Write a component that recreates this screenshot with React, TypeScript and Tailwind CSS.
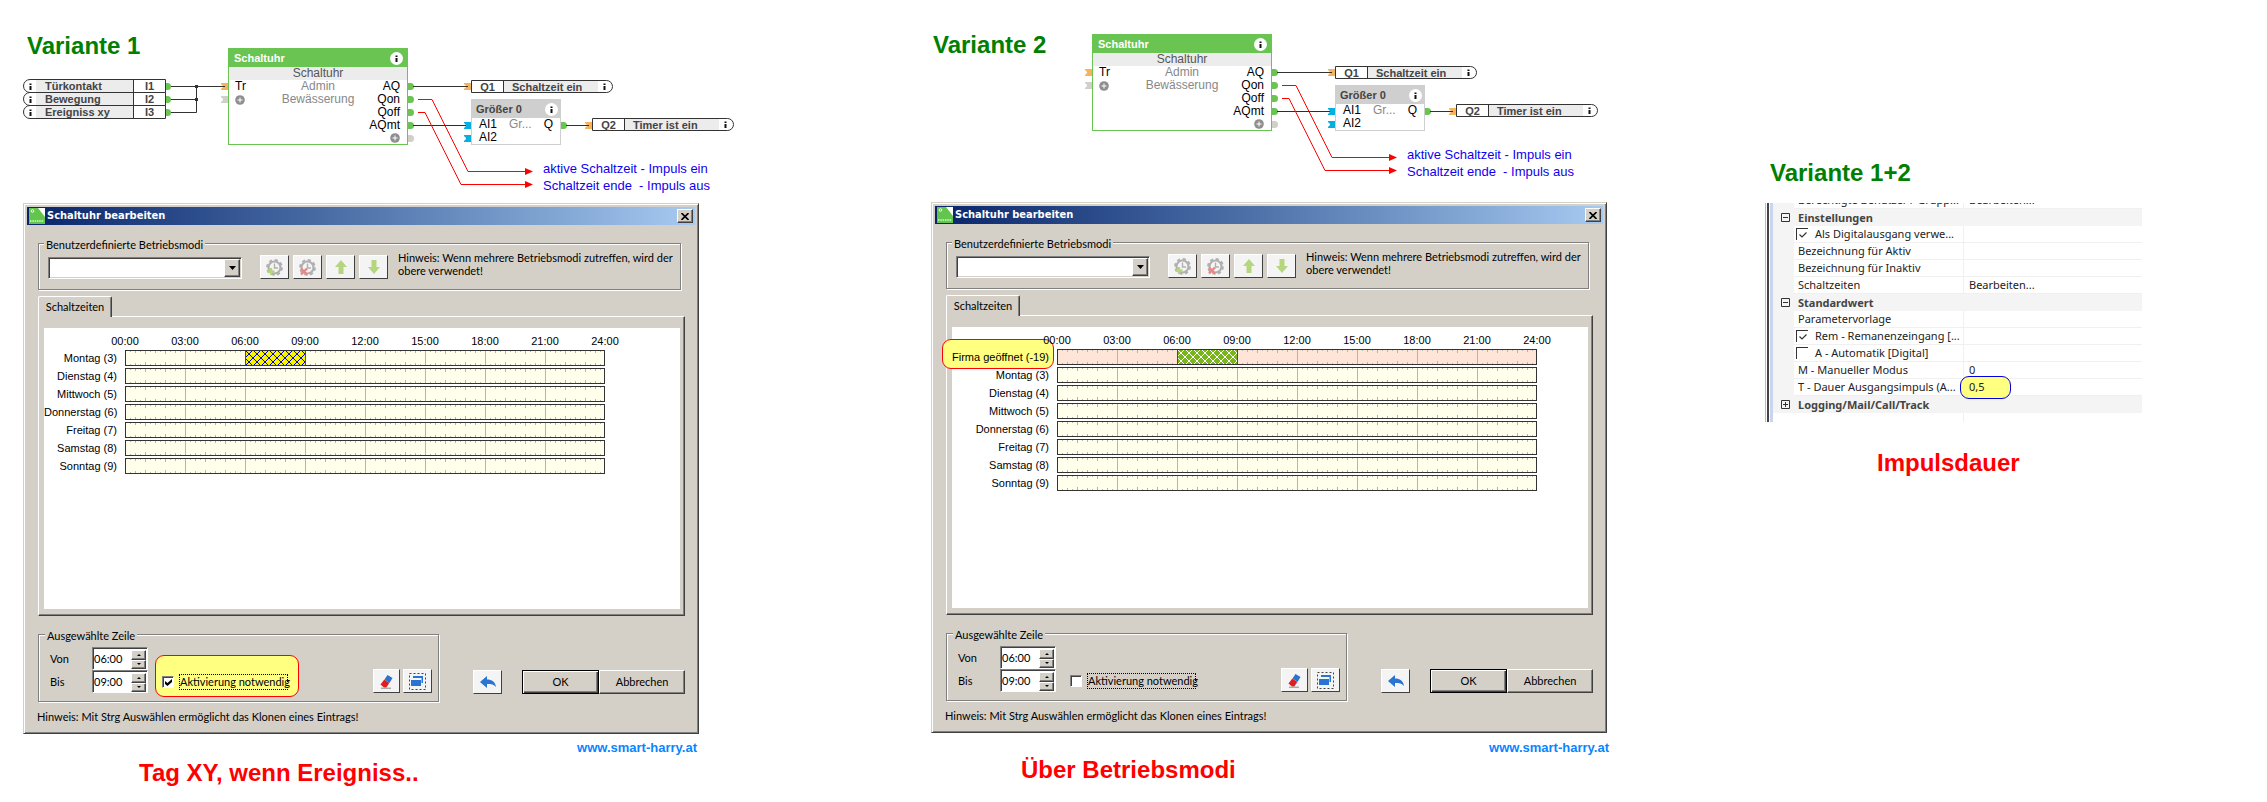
import { ReactNode } from 'react';

const RAISED =
  'border border-t-white border-l-white border-r-[#404040] border-b-[#404040] shadow-[inset_-1px_-1px_0_#808080]';

function InfoDot({ filled }: { filled?: boolean }) {
  return (
    <svg className="w-[13px] h-[13px] shrink-0" viewBox="0 0 13 13">
      {filled && <circle cx="6.5" cy="6.5" r="6.5" fill="#fff" />}
      <path d="M5.500 3.500h2v1.500h-2zM5.500 6h2v4h-2z" fill="#111" />
    </svg>
  );
}

function PlusDot() {
  return (
    <svg className="w-[10px] h-[10px]" viewBox="0 0 10 10">
      <circle cx="5" cy="5" r="4.8" fill="#8e8e8e" />
      <path d="M5 2.500v5M2.500 5h5" stroke="#fff" />
    </svg>
  );
}

function OutPort({ x, y, color = '#69c451' }: { x: number; y: number; color?: string }) {
  return <path d={`M${x} ${y - 3.5}h2.500a3.500 3.500 0 0 1 0 7h-2.500z`} fill={color} />;
}

function InPort({ x, y, color = '#f8b25c' }: { x: number; y: number; color?: string }) {
  return <path d={`M${x} ${y - 3.5}h7v7h-7v-1l2-2v-1l-2-2z`} fill={color} />;
}

function InputPill({ label, port }: { label: string; port: string }) {
  return (
    <div className="-mt-px flex h-[14px] w-[143px] items-stretch rounded-l-full border border-[#333] bg-white text-[11px] leading-3 font-bold text-[#444]">
      <span className="flex w-3 items-center"><InfoDot /></span>
      <span className="flex-1 bg-[#ececec] pl-[9px]">{label}</span>
      <span className="w-8 border-l border-[#333] text-center">{port}</span>
    </div>
  );
}

function OutputPill({ label, port }: { label: string; port: string }) {
  return (
    <div className="flex h-[13px] w-[142px] items-stretch rounded-r-full border border-[#333] bg-white text-[11px] leading-3 font-bold text-[#444]">
      <span className="w-8 border-r border-[#333] text-center">{port}</span>
      <span className="flex-1 bg-[#ececec] pl-2">{label}</span>
      <span className="flex w-[14px] items-center"><InfoDot /></span>
    </div>
  );
}

function InputSources() {
  return (
    <>
      <svg className="absolute left-0 top-[80px] h-[40px] w-[210px]" viewBox="0 0 210 40">
        <OutPort x={142} y={6.5} />
        <OutPort x={142} y={19.5} />
        <OutPort x={142} y={32.5} />
        <path d="M148 6.5h54M148 19.5h25.5M148 32.5h25.5v-26" fill="none" stroke="#333" />
        <path d="M172 5h3v3h-3zM172 18h3v3h-3z" fill="#333" />
      </svg>
      <div className="absolute left-0 top-[80px]">
        <InputPill label="Türkontakt" port="I1" />
        <InputPill label="Bewegung" port="I2" />
        <InputPill label="Ereigniss xy" port="I3" />
      </div>
    </>
  );
}

function LogicDiagram({ className }: { className: string }) {
  return (
    <div className={`absolute h-[150px] w-[520px] ${className}`}>
      <svg className="absolute inset-0" width="520" height="150" viewBox="0 0 520 150">
        <InPort x={1} y={38.5} />
        <InPort x={1} y={51.5} color="#d0cfc8" />
        <OutPort x={188} y={38.5} />
        <OutPort x={188} y={51.5} />
        <OutPort x={188} y={64.5} />
        <OutPort x={188} y={77.5} />
        <OutPort x={188} y={90.5} color="#d0cfc8" />
        <InPort x={244} y={38.5} />
        <InPort x={244} y={77.5} color="#05b0e0" />
        <InPort x={244} y={90.5} color="#05b0e0" />
        <OutPort x={341} y={77.5} />
        <InPort x={365} y={77.5} />
        <g fill="none">
          <path d="M193 38.5h55M346 77.5h23" stroke="#333" />
          <path d="M193 77.5h53" stroke="#7a0c0c" />
          <path d="M198 51.5h14l36 72h58M198 64.5h7l36 72h65" stroke="#f00" />
        </g>
        <path d="M305 120l8 3.5-8 3.5zM305 133l8 3.5-8 3.5z" fill="#f00" />
      </svg>

      {/* timer block */}
      <div className="absolute left-2 top-0 w-[180px] border border-[#69c451] bg-white text-[12px] leading-[13px] text-black">
        <div className="flex h-[18px] items-center justify-between bg-[#69c451] pl-[5px] pr-1 text-[11px] font-bold text-white">
          Schaltuhr <InfoDot filled />
        </div>
        <div className="bg-[#ececec] text-center text-[#555]">Schaltuhr</div>
        <div className="grid grid-cols-[40px_1fr_40px] px-[6px]">
          <div>
            <div>Tr</div>
            <div className="flex h-[13px] items-center"><PlusDot /></div>
          </div>
          <div className="text-center text-[#888]">
            <div>Admin</div>
            <div>Bewässerung</div>
          </div>
          <div className="pr-px text-right">
            <div>AQ</div>
            <div>Qon</div>
            <div>Qoff</div>
            <div>AQmt</div>
            <div className="flex h-3 items-center justify-end"><PlusDot /></div>
          </div>
        </div>
      </div>

      <div className="absolute left-[251px] top-8"><OutputPill port="Q1" label="Schaltzeit ein" /></div>

      <div className="absolute left-[251px] top-[51px] w-[90px] border border-[#cfcfcf] bg-white text-[12px] leading-[13px] text-black">
        <div className="flex h-[18px] items-center justify-between bg-[#cfcfcf] pl-1 pr-[2px] text-[11px] font-bold text-[#444]">
          Größer 0 <InfoDot filled />
        </div>
        <div className="grid grid-cols-[30px_1fr_auto] px-[7px]">
          <span>AI1</span>
          <span className="text-[#888]">Gr...</span>
          <span>Q</span>
          <span>AI2</span>
        </div>
      </div>

      <div className="absolute left-[372px] top-[70px]"><OutputPill port="Q2" label="Timer ist ein" /></div>

      <p className="absolute left-[323px] top-[112px] whitespace-pre text-[13px] leading-[17px] text-[#1000f0]">
        {'aktive Schaltzeit - Impuls ein\nSchaltzeit ende  - Impuls aus'}
      </p>
    </div>
  );
}

function ToolButton({ title, className = 'w-[29px]', children }: { title: string; className?: string; children: ReactNode }) {
  return (
    <button
      type="button"
      title={title}
      aria-label={title}
      className={`flex h-6 shrink-0 items-center justify-center border border-t-white border-l-white border-r-[#404040] border-b-[#404040] bg-[#f4f4f4] ${className}`}
    >
      {children}
    </button>
  );
}

function GearClock({ mark }: { mark: 'add' | 'remove' }) {
  return (
    <svg width="17" height="17" viewBox="0 0 17 17" fill="none">
      <circle cx="8.5" cy="8.5" r="6" stroke="#b0b0b0" strokeWidth="2.2" />
      <circle cx="8.5" cy="8.5" r="7.4" stroke="#b0b0b0" strokeWidth="2" strokeDasharray="3.2 2.61" />
      <path d="M8.5 4.5v4.5h3.5" stroke="#b0b0b0" strokeWidth="1.4" />
      {mark === 'add' ? (
        <path d="M5 9v7M1.5 12.5h7" stroke="#b5d67f" strokeWidth="2.4" />
      ) : (
        <path d="M2 9.5l6 6M8 9.5l-6 6" stroke="#ee8585" strokeWidth="2.4" />
      )}
    </svg>
  );
}

function TimeField({ id, label, value }: { id: string; label: string; value: string }) {
  return (
    <div className="flex items-center">
      <label htmlFor={id} className="w-[42px]">{label}</label>
      <div className="flex h-[23px] w-14 border border-t-[#808080] border-l-[#808080] border-r-white border-b-white bg-white shadow-[inset_1px_1px_0_#404040]">
        <input id={id} type="text" defaultValue={value} className="w-[38px] min-w-0 bg-transparent pl-[1px] outline-none" />
        <div className="flex flex-1 flex-col pt-[2px] pr-px">
          {['M0 3l2-2 2 2z', 'M0 1l2 2 2-2z'].map((d, i) => (
            <button
              key={d}
              type="button"
              aria-label={`${label} ${i ? 'verringern' : 'erhöhen'}`}
              className={`flex flex-1 items-center justify-center bg-[#d4d0c8] ${RAISED}`}
            >
              <svg width="4" height="4" viewBox="0 0 4 4"><path d={d} /></svg>
            </button>
          ))}
        </div>
      </div>
    </div>
  );
}

type Row = { label: string; firm?: boolean; from?: number; to?: number };

const WEEK: Row[] = [
  { label: 'Montag (3)' },
  { label: 'Dienstag (4)' },
  { label: 'Mittwoch (5)' },
  { label: 'Donnerstag (6)' },
  { label: 'Freitag (7)' },
  { label: 'Samstag (8)' },
  { label: 'Sonntag (9)' },
];

const ROWS_1: Row[] = [{ ...WEEK[0], from: 6, to: 9 }, ...WEEK.slice(1)];
const ROWS_2: Row[] = [{ label: 'Firma geöffnet (-19)', firm: true, from: 6, to: 9 }, ...WEEK];

// 20px per hour, a short tick every quarter
function Track({ row, id }: { row: Row; id: string }) {
  const ticks = [];
  for (let q = 1; q < 96; q++) {
    const x = q * 5;
    const len = q % 12 === 0 ? 8 : q % 4 === 0 ? 3 : q % 2 === 0 ? 2 : 1;
    ticks.push(`M${x} 1h1v${len}h-1zM${x} ${15 - len}h1v${len}h-1z`);
  }
  const { from = 0, to = 0 } = row;
  return (
    <svg className="h-4 w-full" viewBox="0 0 480 16" preserveAspectRatio="none" shapeRendering="crispEdges">
      <defs>
        <pattern id={id} width="8" height="8" patternUnits="userSpaceOnUse">
          <rect width="8" height="8" fill={row.firm ? '#7ab51d' : '#f8f400'} />
          <path
            d="M-1 -1l10 10M9 -1l-10 10"
            stroke={row.firm ? '#fff' : '#0000e0'}
            shapeRendering="geometricPrecision"
          />
        </pattern>
      </defs>
      <rect x="0.5" y="0.5" width="479" height="15" fill={row.firm ? '#ffe4d8' : '#ffffec'} stroke="#333" />
      <path d={ticks.join('')} fill="#b4b4b4" />
      {to > from && (
        <>
          <rect x={from * 20} y="1" width={(to - from) * 20} height="14" fill={`url(#${id})`} />
          <path d={`M${from * 20 + 0.5} 1v14M${to * 20 + 0.5} 1v14`} stroke="#f00" />
        </>
      )}
    </svg>
  );
}

function Timeline({ name, rows, cols, marked }: { name: string; rows: Row[]; cols: string; marked?: boolean }) {
  const hours = ['00:00', '03:00', '06:00', '09:00', '12:00', '15:00', '18:00', '21:00', '24:00'];
  return (
    <div className="relative h-[281px] bg-white pt-[6px] font-['Liberation_Sans',Arial,sans-serif] text-[11px] text-black">
      {marked && (
        <div className="absolute -left-[10px] top-3 h-[30px] w-[112px] rounded-[9px] border border-[#f00] bg-[#ffff80]" />
      )}
      <div className={`relative grid ${cols}`}>
        <span />
        <div className="-mx-[30px] flex h-4 justify-between leading-[14px]">
          {hours.map((h) => (
            <span key={h} className="w-[60px] text-center">{h}</span>
          ))}
        </div>
        {rows.map((row, i) => (
          <div key={row.label} className="col-span-2 grid h-[18px] grid-cols-subgrid leading-4">
            <span className="whitespace-nowrap pr-2 text-right">{row.label}</span>
            <Track row={row} id={`${name}-hatch-${i}`} />
          </div>
        ))}
      </div>
    </div>
  );
}

type DialogProps = { name: string; rows: Row[]; cols: string; checked: boolean; marked?: boolean };

function ScheduleDialog({ name, rows, cols, checked, marked }: DialogProps) {
  return (
    <section className="w-full max-w-[676px] border border-t-[#d4d0c8] border-l-[#d4d0c8] border-r-[#404040] border-b-[#404040] bg-[#d4d0c8] p-[3px] font-[Lato,Tahoma,sans-serif] text-[11px] text-black shadow-[inset_1px_1px_0_#fff,inset_-1px_-1px_0_#808080]">
      <header className="flex h-[18px] items-center bg-linear-to-r from-[#0a246a] to-[#a6caf0] px-[2px]">
        <svg width="16" height="16" viewBox="0 0 16 16">
          <path d="M0 0h10l6 8v8H0z" fill="#62c64c" />
          <path d="M9 0h7v9z" fill="#fff" />
          <circle cx="3.5" cy="3" r="1.3" fill="none" stroke="#fff" />
          <path d="M1 13h14" stroke="#d8f5d0" strokeWidth="1.5" strokeDasharray="1.5 .8" />
        </svg>
        <h2 className="flex-1 pl-[2px] font-['DejaVu_Sans_Condensed','DejaVu_Sans',sans-serif] font-bold text-white">
          Schaltuhr bearbeiten
        </h2>
        <button type="button" aria-label="Schließen" className={`flex h-[14px] w-4 items-center justify-center bg-[#d4d0c8] ${RAISED}`}>
          <svg width="8" height="7" viewBox="0 0 8 7"><path d="M.5 0l7 7M7.5 0l-7 7" stroke="#000" strokeWidth="1.6" /></svg>
        </button>
      </header>

      <div className="pl-[11px] pr-[10px] pt-3">
        <fieldset className="mr-1 h-[53px] border border-[#808080] pl-[9px] pr-[2px] shadow-[1px_1px_0_#fff,inset_1px_1px_0_#fff]">
          <legend className="-ml-[4px] h-[13px] bg-[#d4d0c8] px-[2px] leading-[15px]">Benutzerdefinierte Betriebsmodi</legend>
          <div className="flex">
            <div className="relative mt-[7px] h-[22px] w-[194px] shrink-0 border border-t-[#808080] border-l-[#808080] border-r-white border-b-white bg-white shadow-[inset_1px_1px_0_#404040,inset_-1px_-1px_0_#d4d0c8]">
              <select aria-label="Betriebsmodus" className="h-full w-full appearance-none bg-transparent px-1 outline-none" defaultValue="">
                <option value=""></option>
              </select>
              <span className={`pointer-events-none absolute bottom-px right-px top-px flex w-4 items-center justify-center bg-[#d4d0c8] ${RAISED}`}>
                <svg width="7" height="4" viewBox="0 0 7 4"><path d="M0 0h7L3.5 4z" /></svg>
              </span>
            </div>
            <div className="ml-[18px] flex gap-1 pt-[5px]">
              <ToolButton title="Betriebsmodus hinzufügen"><GearClock mark="add" /></ToolButton>
              <ToolButton title="Betriebsmodus entfernen"><GearClock mark="remove" /></ToolButton>
              <ToolButton title="Nach oben">
                <svg width="12" height="14" viewBox="0 0 12 14"><path d="M6 0l6 7H8.500v7h-5V7H0z" fill="#b5d67f" /></svg>
              </ToolButton>
              <ToolButton title="Nach unten">
                <svg width="12" height="14" viewBox="0 0 12 14"><path d="M6 14l6-7H8.500V0h-5v7H0z" fill="#b5d67f" /></svg>
              </ToolButton>
            </div>
            <p className="ml-[10px] pt-px leading-[13px]">
              Hinweis: Wenn mehrere Betriebsmodi zutreffen, wird der<br />
              obere verwendet!
            </p>
          </div>
        </fieldset>

        {/* tabs */}
        <div role="tablist" className="mt-[6px] flex">
          <button
            type="button"
            role="tab"
            aria-selected="true"
            className="relative -mb-px h-[21px] w-[74px] rounded-t-[2px] border border-b-0 border-t-white border-l-white border-r-[#404040] bg-[#d4d0c8] shadow-[inset_-1px_0_0_#808080]"
          >
            Schaltzeiten
          </button>
        </div>
        <div className="border border-t-white border-l-white border-r-[#404040] border-b-[#404040] pb-[6px] pl-[5px] pr-1 pt-[11px] shadow-[inset_-1px_-1px_0_#808080]">
          <Timeline name={name} rows={rows} cols={cols} marked={marked} />
        </div>

        <div className="mt-3 flex items-end">
          <fieldset className="h-[74px] w-[401px] shrink-0 border border-[#808080] px-[11px] shadow-[1px_1px_0_#fff,inset_1px_1px_0_#fff]">
            <legend className="-ml-[5px] h-[13px] bg-[#d4d0c8] px-[2px] leading-[15px]">Ausgewählte Zeile</legend>
            <div className="flex items-end pt-[6px]">
              <div className="leading-[18px]">
                <TimeField id={`${name}-von`} label="Von" value="06:00" />
                <TimeField id={`${name}-bis`} label="Bis" value="09:00" />
              </div>
              <div
                className={`ml-[7px] -mb-1 flex h-[42px] w-[144px] items-end rounded-[9px] border pb-[6px] pl-[6px] ${
                  checked ? 'border-[#f00] bg-[#ffff80]' : 'border-transparent'
                }`}
              >
                <span className="relative mb-[2px] h-3 w-3">
                  <input
                    id={`${name}-aktiv`}
                    type="checkbox"
                    defaultChecked={checked}
                    className="peer block h-3 w-3 appearance-none border border-t-[#808080] border-l-[#808080] border-r-white border-b-white bg-white shadow-[inset_1px_1px_0_#404040]"
                  />
                  <svg className="pointer-events-none absolute left-[3px] top-[3px] hidden peer-checked:block" width="7" height="7" viewBox="0 0 7 7">
                    <path d="M0 2v3l2.500 2L7 3V0L2.500 4z" />
                  </svg>
                </span>
                <label htmlFor={`${name}-aktiv`} className="ml-[5px] h-4 w-[109px] whitespace-nowrap border border-dotted border-black leading-[14px]">
                  Aktivierung notwendig
                </label>
              </div>
              <div className="ml-auto -mr-[5px] flex gap-[3px]">
                <ToolButton title="Löschen" className="w-[27px]">
                  <svg width="13" height="15" viewBox="0 0 13 15">
                    <path d="M7.500 1l5 3-3 5-5-3.500z" fill="#2874d0" />
                    <path d="M4.300 5.500l5 3.500-3 4.500H4L.5 10.500z" fill="#dc1f1f" />
                    <path d="M1 14.200h10" stroke="#888" />
                  </svg>
                </ToolButton>
                <ToolButton title="Auswahl kopieren">
                  <svg width="17" height="17" viewBox="0 0 17 17">
                    <rect x=".5" y=".5" width="16" height="16" fill="none" stroke="#444" strokeDasharray="2 2" />
                    <path d="M4 3h10v7h-1.500V5H4z" fill="#2874d0" />
                    <path d="M2 7h10v6H2z" fill="#2874d0" />
                  </svg>
                </ToolButton>
              </div>
            </div>
          </fieldset>
          <div className="mb-2 ml-[34px] flex">
            <ToolButton title="Rückgängig">
              <svg width="16" height="12" viewBox="0 0 16 12">
                <path d="M0 6l7-6v3.500c5 0 8 2 9 7.500-2-2.500-4.500-3-9-3V12z" fill="#2874d0" />
              </svg>
            </ToolButton>
          </div>
          <div className="mb-2 ml-5 flex flex-1">
            <button type="button" className="h-6 flex-[77] border border-black bg-[#d4d0c8] shadow-[inset_1px_1px_0_#fff,inset_-1px_-1px_0_#404040,inset_-2px_-2px_0_#808080]">OK</button>
            <button type="button" className={`h-6 flex-[86] bg-[#d4d0c8] ${RAISED}`}>Abbrechen</button>
          </div>
        </div>

        <p className="-ml-px pb-[5px] pt-[7px] leading-[16px]">
          Hinweis: Mit Strg Auswählen ermöglicht das Klonen eines Eintrags!
        </p>
      </div>
    </section>
  );
}

type Prop = { name: string; value?: string; group?: 'open' | 'closed'; check?: boolean; marked?: boolean };

const PROPS: Prop[] = [
  { name: 'Berechtigte Benutzer / Grupp...', value: 'Bearbeiten...' },
  { name: 'Einstellungen', group: 'open' },
  { name: 'Als Digitalausgang verwe...', check: true },
  { name: 'Bezeichnung für Aktiv' },
  { name: 'Bezeichnung für Inaktiv' },
  { name: 'Schaltzeiten', value: 'Bearbeiten...' },
  { name: 'Standardwert', group: 'open' },
  { name: 'Parametervorlage' },
  { name: 'Rem - Remanenzeingang [...', check: true },
  { name: 'A - Automatik [Digital]', check: false },
  { name: 'M - Manueller Modus', value: '0' },
  { name: 'T - Dauer Ausgangsimpuls (A...', value: '0,5', marked: true },
  { name: 'Logging/Mail/Call/Track', group: 'closed' },
];

function PropertyCheck({ prop }: { prop: Prop }) {
  return (
    <label className="flex items-center">
      <span className="relative -ml-[2px] mr-[7px] h-3 w-3 shrink-0">
        <input type="checkbox" defaultChecked={prop.check} className="peer block h-3 w-3 appearance-none border-l border-t border-[#333] bg-white" />
        <svg className="pointer-events-none absolute left-[3px] top-[4px] hidden peer-checked:block" width="8" height="6" viewBox="0 0 8 6">
          <path d="M.5 2.500l2.500 2.500L7.500.5" fill="none" stroke="#333" strokeWidth="1.2" />
        </svg>
      </span>
      {prop.name}
    </label>
  );
}

function PropertyGrid() {
  return (
    <div className="flex h-[219px] w-full max-w-[377px] overflow-hidden font-['Noto_Sans','Open_Sans',sans-serif] text-[11px] text-[#222]">
      <div className="w-1 shrink-0 border-l border-r-2 border-l-[#bbb] border-r-[#444]" />
      <div className="ml-px w-[3px] shrink-0 bg-[#c8d4f0]" />
      <table className="-mt-[11px] h-fit w-full table-fixed border-separate border-spacing-0">
        <colgroup>
          <col className="w-[21px]" />
          <col className="w-[170px]" />
          <col />
        </colgroup>
        <tbody>
          {PROPS.map((p) => (
            <tr key={p.name} className="h-[17px] leading-4">
              <td className="bg-[#f4f4f4] p-0">
                {p.group && (
                  <button type="button" aria-label={p.name} aria-expanded={p.group === 'open'} className="ml-2 block">
                    <svg width="9" height="9" viewBox="0 0 9 9" fill="none" stroke="#333">
                      <path d={p.group === 'open' ? 'M.5.5h8v8h-8zM2 4.500h5' : 'M.5.5h8v8h-8zM2 4.500h5M4.500 2v5'} />
                    </svg>
                  </button>
                )}
              </td>
              {p.group ? (
                <th colSpan={2} className="bg-[#f4f4f4] p-0 pl-1 text-left font-bold text-[#444]">{p.name}</th>
              ) : (
                <>
                  <td className="whitespace-nowrap border-b border-r border-[#f0f0f0] p-0 pl-1">
                    {p.check === undefined ? p.name : <PropertyCheck prop={p} />}
                  </td>
                  <td className="relative border-b border-[#f0f0f0] p-0 pl-[5px]">
                    {p.marked && (
                      <span className="absolute -left-1 -top-[3px] h-[23px] w-[51px] rounded-[9px] border border-[#0000e0] bg-[#ffff80]" />
                    )}
                    <span className="relative">{p.value}</span>
                  </td>
                </>
              )}
            </tr>
          ))}
          <tr className="h-[9px]">
            <td className="bg-white p-0"></td>
            <td className="border-r border-[#f0f0f0] p-0"></td>
            <td className="p-0"></td>
          </tr>
        </tbody>
      </table>
    </div>
  );
}

function SiteLink() {
  return <a href="http://www.smart-harry.at" className="text-[13px] leading-5 font-bold text-[#0a84ff]">www.smart-harry.at</a>;
}

export default function App() {
  return (
    <main className="grid grid-cols-[908fr_834fr_525fr] bg-white font-['Liberation_Sans',Arial,sans-serif]">
      <article className="pl-[23px]">
        <div className="relative h-[203px] pt-[30px]">
          <h1 className="pl-1 text-[24px] leading-8 font-bold text-[#008000]">Variante 1</h1>
          <LogicDiagram className="left-[197px] top-[48px]" />
          <InputSources />
        </div>
        <ScheduleDialog name="v1" rows={ROWS_1} cols="grid-cols-[81px_480px]" checked />
        <div className="flex max-w-[676px] justify-end pr-[2px] pt-1"><SiteLink /></div>
        <p className="-mt-px pl-[116px] text-[24px] leading-8 font-bold text-[#f00]">Tag XY, wenn Ereigniss..</p>
      </article>

      <article className="pl-[23px]">
        <div className="relative h-[202px] pt-[29px]">
          <h1 className="pl-[2px] text-[24px] leading-8 font-bold text-[#008000]">Variante 2</h1>
          <LogicDiagram className="left-[153px] top-[34px]" />
        </div>
        <ScheduleDialog name="v2" rows={ROWS_2} cols="grid-cols-[105px_480px]" checked={false} marked />
        <div className="flex max-w-[678px] justify-end pt-[5px]"><SiteLink /></div>
        <p className="-mt-1 pl-[90px] text-[24px] leading-8 font-bold text-[#f00]">Über Betriebsmodi</p>
      </article>

      <article className="pl-[23px]">
        <h1 className="pb-[14px] pl-[5px] pt-[157px] text-[24px] leading-8 font-bold text-[#008000]">Variante 1+2</h1>
        <PropertyGrid />
        <p className="pl-[112px] pt-[25px] text-[24px] leading-8 font-bold text-[#f00]">Impulsdauer</p>
      </article>
    </main>
  );
}
